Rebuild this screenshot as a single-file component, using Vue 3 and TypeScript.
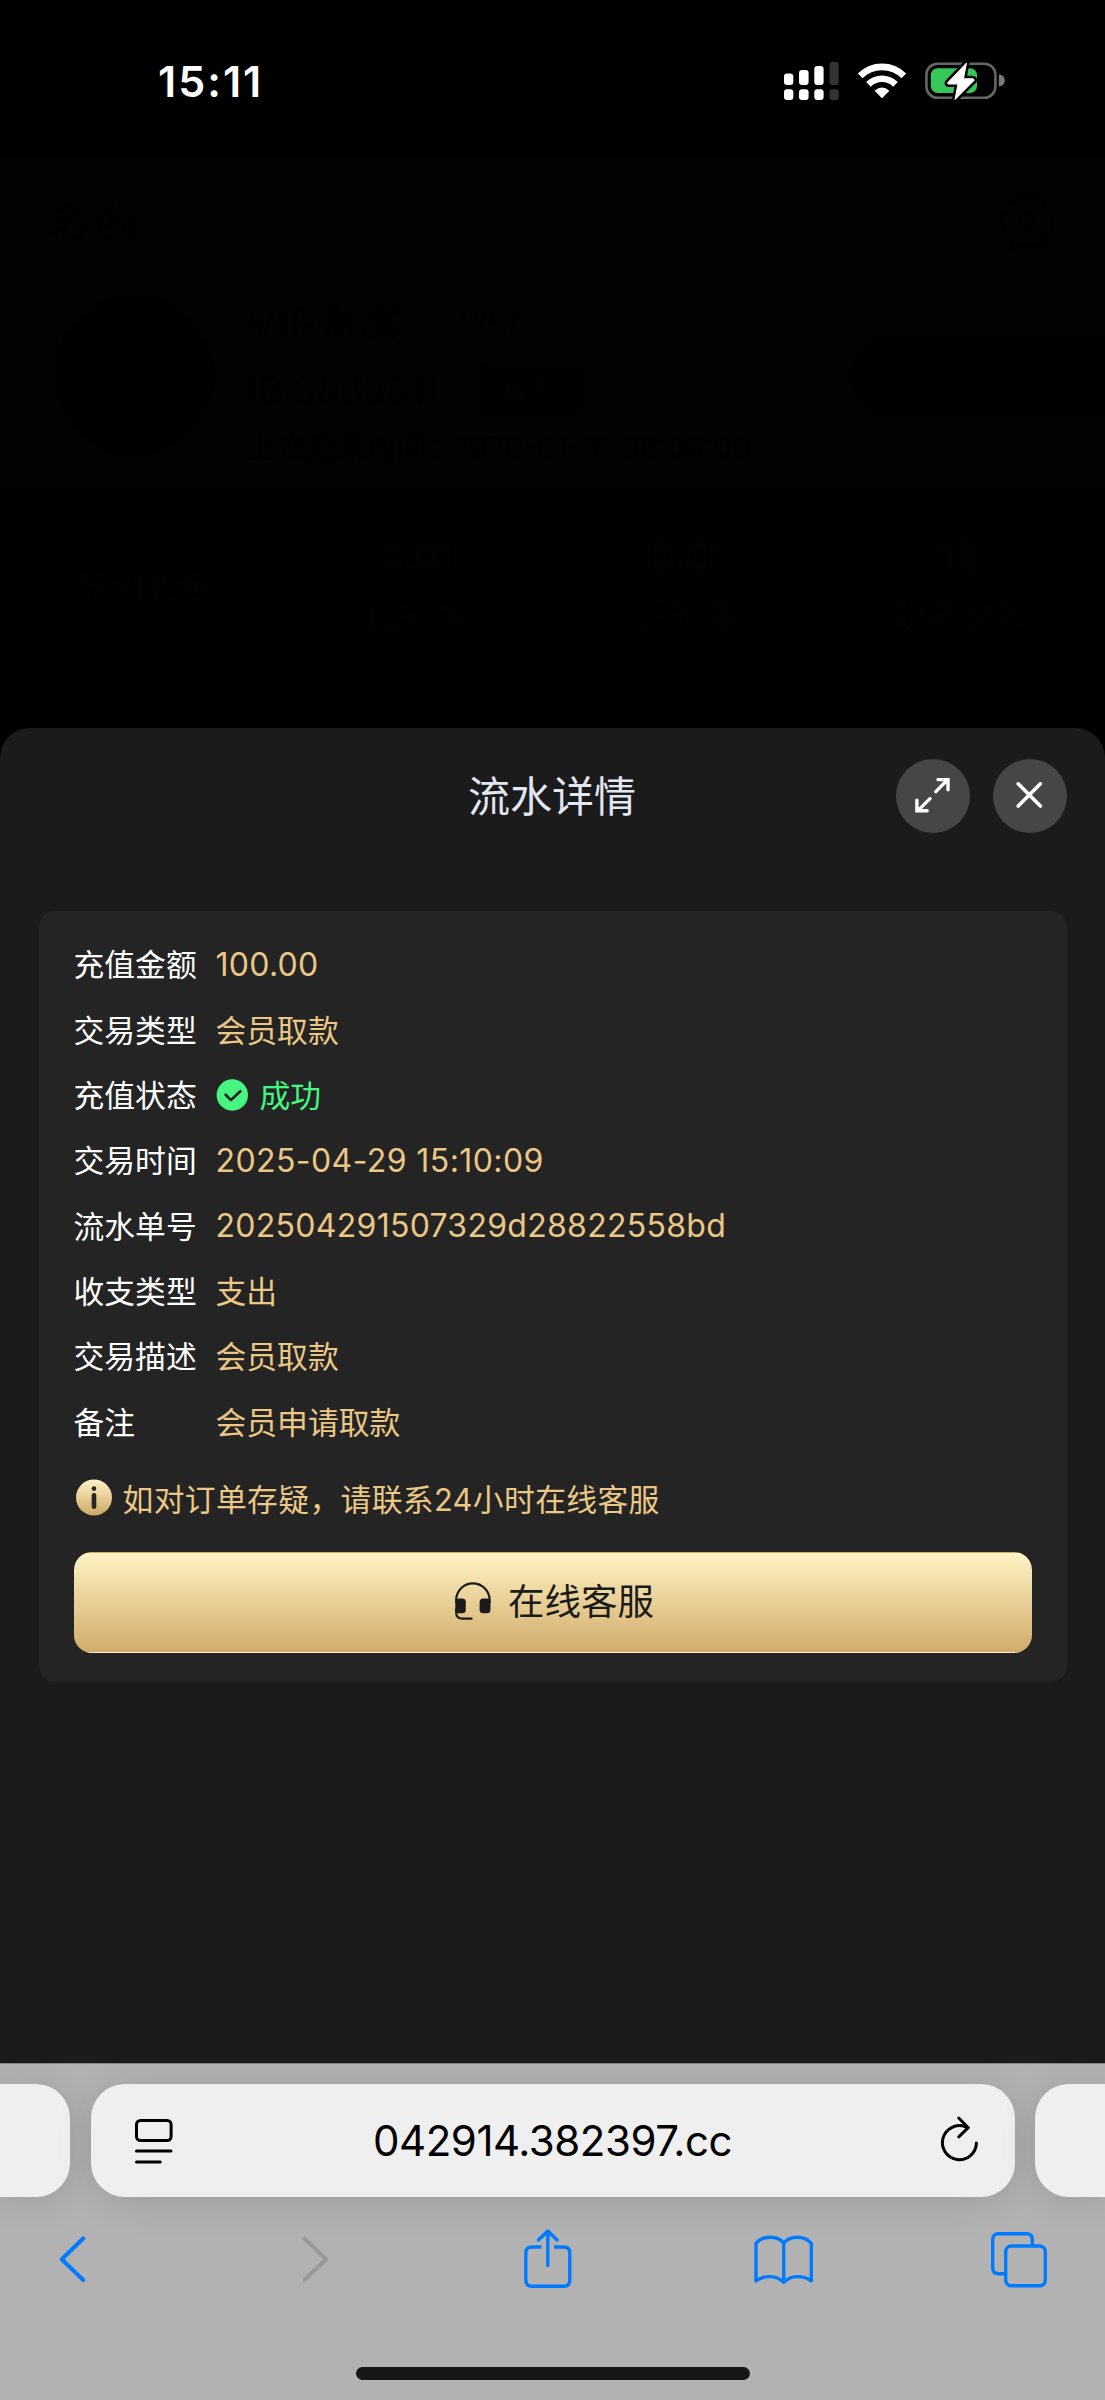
<script setup lang="ts">
interface DetailRow {
  label: string
  value: string
  kind?: 'status' | 'number' | 'time'
}

const rows: DetailRow[] = [
  { label: '充值金额', value: '100.00', kind: 'number' },
  { label: '交易类型', value: '会员取款' },
  { label: '充值状态', value: '成功', kind: 'status' },
  { label: '交易时间', value: '2025-04-29 15:10:09', kind: 'time' },
  { label: '流水单号', value: '202504291507329d28822558bd', kind: 'number' },
  { label: '收支类型', value: '支出' },
  { label: '交易描述', value: '会员取款' },
  { label: '备注', value: '会员申请取款' },
]

const stats = [
  { value: '', label: '签到礼金' },
  { value: '0.01', label: '周礼金' },
  { value: '0.01', label: '月礼金' },
  { value: '18', label: '观看次数' },
]
</script>

<template>
  <div class="screen" lang="zh-CN">
    <header class="status-bar">
      <span class="clock">15:11</span>
      <div class="indicators">
        <svg class="signal" width="55" height="38" viewBox="0 0 55 38">
          <g fill="#fff">
            <rect x="0" y="11.5" width="9.3" height="11.5" rx="3" />
            <rect x="15" y="8" width="9.6" height="15" rx="3" />
            <rect x="30.3" y="4" width="9.3" height="19" rx="3" />
            <rect x="0" y="27.3" width="9.3" height="10.7" rx="3" />
            <rect x="15" y="27.3" width="9.6" height="10.7" rx="3" />
            <rect x="30.3" y="27.3" width="9.3" height="10.7" rx="3" />
          </g>
          <g fill="#333">
            <rect x="45.5" y="0" width="9.3" height="23" rx="3" />
            <rect x="45.5" y="27.3" width="9.3" height="10.7" rx="3" />
          </g>
        </svg>
        <svg class="wifi" width="50" height="36" viewBox="0 0 50 36">
          <g fill="none" stroke="#fff" stroke-width="6.6">
            <path d="M3.2 12.8 A31 31 0 0 1 46.8 12.8" />
            <path d="M11.5 21.3 A19.2 19.2 0 0 1 38.5 21.3" />
          </g>
          <path fill="#fff" d="M25 35.3 L17.6 27.8 Q25 21.2 32.4 27.8 Z" />
        </svg>
        <svg class="battery" width="80" height="40" viewBox="0 0 80 40">
          <rect x="1.4" y="2.7" width="69" height="34" rx="11" fill="none" stroke="#666" stroke-width="2.6" />
          <path d="M73.8 13.5 a6 6 0 0 1 0 12 z" fill="#777" />
          <rect x="5.8" y="7.2" width="46.2" height="24.8" rx="7" fill="#35c759" />
          <path d="M41.5 2 L22.8 21.6 Q22.2 22.8 23.5 23 H33 L30 38.5 L49 19.5 Q49.5 18.2 48 17.8 H38.5 Z" fill="#fff" stroke="#000" stroke-width="6" stroke-linejoin="round" />
          <path d="M41.5 2 L22.8 21.6 Q22.2 22.8 23.5 23 H33 L30 38.5 L49 19.5 Q49.5 18.2 48 17.8 H38.5 Z" fill="#fff" stroke="#fff" stroke-width="1" stroke-linejoin="round" />
        </svg>
      </div>
    </header>

    <!-- profile page, dimmed by the modal backdrop -->
    <section class="profile" aria-hidden="true">
      <div class="profile-bar">
        <span class="profile-title">我的</span>
        <svg width="60" height="56" viewBox="0 0 60 56" fill="none" stroke="#000" stroke-width="5" stroke-linejoin="round">
          <path d="M17 3 H43 L57 28 L43 53 H17 L3 28 Z" />
          <circle cx="30" cy="28" r="7" />
        </svg>
      </div>
      <div class="user">
        <div class="avatar"></div>
        <div class="user-info">
          <div class="user-line name">VIP贵宾<span class="vip">VIP1</span></div>
          <div class="user-line uid">ID:3838811<span class="copy">复制</span></div>
          <div class="user-line login">上次登录时间：1970-01-01 08:00:00</div>
        </div>
        <div class="signed">已签到</div>
      </div>
      <div class="stats">
        <div v-for="s in stats" :key="s.label" class="stat">
          <b v-if="s.value">{{ s.value }}</b>
          <span>{{ s.label }}</span>
        </div>
      </div>
    </section>

    <main class="sheet">
      <div class="sheet-head">
        <h1>流水详情</h1>
        <div class="head-actions">
          <button class="round" aria-label="expand">
            <svg width="74" height="74" viewBox="0 0 74 74" fill="none" stroke="#fff" stroke-width="3.4" stroke-linecap="round">
              <path d="M39.8 32.6 L51.6 20.8 M42 20.6 H52 V30.8" />
              <path d="M34 39.6 L22.2 51.4 M20.9 41.2 V51.7 H31.2" />
            </svg>
          </button>
          <button class="round" aria-label="close">
            <svg width="74" height="74" viewBox="0 0 74 74" fill="none" stroke="#fff" stroke-width="3.6" stroke-linecap="round">
              <path d="M25.2 24.8 L47.4 47 M47.4 24.8 L25.2 47" />
            </svg>
          </button>
        </div>
      </div>

      <section class="card">
        <dl class="details">
          <div v-for="row in rows" :key="row.label" class="row">
            <dt>{{ row.label }}</dt>
            <dd :class="row.kind">
              <svg v-if="row.kind === 'status'" width="32" height="32" viewBox="0 0 32 32">
                <circle cx="16.3" cy="16" r="15.7" fill="#47f581" />
                <path d="M9.6 15.8 L15 21.1 L24.3 12.2" fill="none" stroke="#242424" stroke-width="2.7" stroke-linecap="round" stroke-linejoin="round" />
              </svg>
              <span>{{ row.value }}</span>
            </dd>
          </div>
        </dl>

        <p class="notice">
          <svg width="36" height="37" viewBox="0 0 36 37">
            <defs>
              <linearGradient id="gold" x1="0" y1="0" x2="0" y2="1">
                <stop offset="0" stop-color="#fff3c4" />
                <stop offset="1" stop-color="#cda766" />
              </linearGradient>
            </defs>
            <circle cx="18" cy="18.5" r="18" fill="url(#gold)" />
            <circle cx="18" cy="9.6" r="2.3" fill="#242424" />
            <rect x="15.7" y="14" width="4.6" height="16" rx="2.3" fill="#242424" />
          </svg>
          <span>如对订单存疑，请联系24小时在线客服</span>
        </p>

        <button class="service">
          <svg width="36" height="38" viewBox="0 0 36 38">
            <path d="M1.2 21 V18 A16.6 16.6 0 0 1 34.6 18 V21" fill="none" stroke="#1b1b1b" stroke-width="2.2" />
            <rect x="0.3" y="16.6" width="10.5" height="14.6" rx="3.5" fill="#1b1b1b" />
            <rect x="24.6" y="16.6" width="10.9" height="14.6" rx="3.5" fill="#1b1b1b" />
            <path d="M1.2 27 V30.5 Q1.2 36.6 7.5 36.6 H16.6" fill="none" stroke="#1b1b1b" stroke-width="2.2" stroke-linecap="round" />
          </svg>
          <span>在线客服</span>
        </button>
      </section>
    </main>

    <footer class="browser">
      <div class="tabs">
        <div class="pill side left"></div>
        <div class="pill address">
          <svg width="38" height="46" viewBox="0 0 38 46" fill="none" stroke="#000" stroke-width="3" stroke-linecap="round">
            <rect x="1.5" y="2.5" width="34.6" height="20" rx="4" />
            <path d="M1.5 33 H36 M1.5 44 H25.2" />
          </svg>
          <span class="url">042914.382397.cc</span>
          <svg width="46" height="50" viewBox="-8 0 46 50" fill="none" stroke="#000" stroke-width="3" stroke-linecap="round" stroke-linejoin="round">
            <path d="M35.4 27 A17 17 0 1 1 24.5 10.8 L27 11.6" />
            <path d="M17.8 2 L27.2 11.7 L17.8 20.8" />
          </svg>
        </div>
        <div class="pill side right"></div>
      </div>
      <nav class="toolbar">
        <svg class="back" width="28" height="60" viewBox="0 0 28 60" fill="none" stroke="#007aff" stroke-width="4" stroke-linecap="round" stroke-linejoin="round">
          <path d="M25.2 9.5 L3.7 30.2 L25.2 51" />
        </svg>
        <svg class="forward" width="28" height="60" viewBox="0 0 28 60" fill="none" stroke="#999" stroke-width="4" stroke-linecap="round" stroke-linejoin="round">
          <path d="M3.5 9.5 L25 30.2 L3.5 51" />
        </svg>
        <svg class="share" width="50" height="60" viewBox="0 0 50 60" fill="none" stroke="#007aff" stroke-width="3.4" stroke-linecap="round" stroke-linejoin="round">
          <path stroke-linecap="butt" d="M18.5 18 H8.8 Q2.8 18 2.8 24 V51 Q2.8 57.2 8.8 57.2 H40.8 Q46.8 57.2 46.8 51 V24 Q46.8 18 40.8 18 H31" />
          <path d="M24.8 36.5 V1.9 M15.5 11 L24.8 2 L34.1 11" />
        </svg>
        <svg class="book" width="62" height="60" viewBox="0 0 62 60" fill="none" stroke="#007aff" stroke-width="3.4" stroke-linecap="round" stroke-linejoin="round">
          <path d="M30.7 14 Q26 8.2 17 8.2 Q8 8.2 3 14.3 V52 Q9 47.6 17 47.6 Q25 47.6 30.7 53.3 Q36.5 47.6 44.5 47.6 Q53 47.6 58.3 52 V14.3 Q53 8.2 44.5 8.2 Q35.5 8.2 30.7 14 V53.3" />
        </svg>
        <svg class="windows" width="58" height="60" viewBox="0 0 58 60" fill="none" stroke="#007aff" stroke-width="3.4">
          <path d="M14.5 44.7 H8.5 Q2.7 44.7 2.7 39 V10.5 Q2.7 4.8 8.5 4.8 H36.5 Q42.3 4.8 42.3 10.5 V16" />
          <rect x="15.7" y="17" width="39.6" height="39.8" rx="5.5" />
        </svg>
      </nav>
      <div class="home-indicator"></div>
    </footer>
  </div>
</template>

<style>
body {
  margin: 0;
  background: #000;
}
</style>

<style scoped>
.screen {
  width: 1105px;
  height: 2400px;
  display: flex;
  flex-direction: column;
  overflow: hidden;
  background: #000;
  font-family: Inter, 'Noto Sans CJK SC', sans-serif;
}
.screen * {
  box-sizing: border-box;
}
svg {
  display: block;
  flex: none;
}
button {
  border: 0;
  padding: 0;
  font: inherit;
}

.status-bar {
  height: 155px;
  flex: none;
  display: flex;
  justify-content: space-between;
  padding: 0 100px 0 158px;
}
.clock {
  margin-top: 55px;
  font-size: 43px;
  line-height: 52px;
  font-weight: 600;
  letter-spacing: 2px;
  color: #fff;
}
.indicators {
  display: flex;
  align-items: flex-start;
}
.signal {
  margin-top: 62px;
}
.wifi {
  margin: 63px 0 0 18px;
}
.battery {
  margin: 61px 0 0 18px;
}

.profile {
  height: 573px;
  flex: none;
  display: flex;
  flex-direction: column;
  background: #020200;
  color: #000;
}
.profile-bar {
  display: flex;
  justify-content: space-between;
  align-items: center;
  height: 134px;
  padding: 0 48px 0 51px;
}
.profile-title {
  font-size: 43px;
  font-weight: 500;
}
.user {
  display: flex;
  height: 201px;
  padding-left: 54px;
}
.avatar {
  width: 160px;
  height: 160px;
  margin-top: 6px;
  border-radius: 50%;
  background: #000;
}
.user-info {
  width: 603px;
  margin-left: 33px;
}
.user-line {
  display: flex;
  align-items: center;
  white-space: nowrap;
}
.name {
  height: 64px;
  font-size: 43px;
  font-weight: 500;
}
.vip {
  margin-left: 54px;
  font-size: 30px;
  font-style: italic;
}
.uid {
  height: 72px;
  font-size: 37px;
}
.copy {
  margin-left: 39px;
  width: 101px;
  height: 51px;
  line-height: 51px;
  text-align: center;
  border-radius: 8px;
  background: #000;
  color: #020202;
  font-size: 28px;
}
.login {
  height: 40px;
  font-size: 30px;
  color: #010100;
}
.signed {
  flex: 1;
  height: 83px;
  margin-top: 46px;
  padding-left: 74px;
  line-height: 83px;
  font-size: 35px;
  border-radius: 42px 0 0 42px;
  background: #000;
  color: #010101;
}
.stats {
  flex: 1;
  display: flex;
  padding: 38px 10px 0;
  background: #000;
  color: #020202;
}
.stat {
  flex: 1;
  height: 114px;
  display: flex;
  flex-direction: column;
  align-items: center;
  justify-content: center;
  gap: 10px;
  font-size: 33px;
}
.stat b {
  font-size: 38px;
  font-weight: 500;
}

.sheet {
  height: 1335px;
  flex: none;
  display: flex;
  flex-direction: column;
  padding: 31px 38.5px 0;
  border-radius: 30px 30px 0 0;
  background: #1b1b1b;
}
.sheet-head {
  display: grid;
  grid-template-columns: 1fr auto 1fr;
  align-items: center;
  height: 74px;
}
.sheet-head h1 {
  grid-column: 2;
  margin: 2px 1px 0 0;
  font-size: 42px;
  line-height: 60px;
  font-weight: 400;
  color: #e2e6f2;
}
.head-actions {
  justify-self: end;
  display: flex;
  gap: 23px;
}
.round {
  width: 74px;
  height: 74px;
  border-radius: 50%;
  background: #464646;
}
.card {
  height: 771px;
  margin-top: 78px;
  padding: 20.5px 35px 0;
  border-radius: 16px;
  background: #242424;
}
.details {
  margin: 0;
}
.row {
  display: flex;
  align-items: center;
  height: 65.35px;
}
dt {
  width: 142px;
  padding-bottom: 3px;
  font-size: 30.8px;
  color: #fff;
}
dd {
  margin: 0;
  padding-bottom: 3px;
  display: flex;
  align-items: center;
  gap: 12px;
  font-size: 30.8px;
  color: #ebc786;
}
.number,
.time {
  padding-bottom: 0;
  font-size: 32px;
  letter-spacing: 0.28px;
}
.time {
  letter-spacing: 0.42px;
}
.status {
  color: #47f581;
}
.status svg {
  margin-top: 3px;
}
.notice {
  display: flex;
  align-items: center;
  gap: 11px;
  height: 54px;
  margin: 16.5px 0 0;
  padding-left: 2px;
  font-size: 30.8px;
  letter-spacing: 0.35px;
  color: #ebc786;
}
.notice span {
  margin-top: -1px;
}
.service {
  width: 100%;
  height: 101px;
  margin-top: 27px;
  padding-left: 4px;
  display: flex;
  align-items: center;
  justify-content: center;
  gap: 17px;
  border: 1px solid transparent;
  border-radius: 18px;
  background: linear-gradient(#fff3c4, #d1ab6a);
  font-size: 36.5px;
  color: #1b1b1b;
}
.service svg {
  margin-top: -3px;
}
.service span {
  margin-top: -5px;
}

.browser {
  flex: 1;
  display: flex;
  flex-direction: column;
  align-items: center;
  background: #b2b2b2;
  border-top: 1px solid #858585;
}
.tabs {
  width: 100%;
  height: 113px;
  flex: none;
  margin-top: 20px;
  display: flex;
  gap: 20.5px;
}
.pill {
  background: #efefef;
  box-shadow: 0 4px 36px rgba(0, 0, 0, 0.13);
}
.side {
  width: 70px;
}
.left {
  border-radius: 0 34px 34px 0;
}
.right {
  border-radius: 34px 0 0 34px;
}
.address {
  flex: 1;
  display: flex;
  align-items: center;
  justify-content: space-between;
  padding: 0 36px 0 44px;
  border-radius: 34px;
}
.url {
  font-size: 42px;
  letter-spacing: -0.45px;
  color: #000;
}
.toolbar {
  width: 100%;
  display: flex;
  margin-top: 32px;
  padding-left: 57.5px;
}
.forward {
  margin-left: 215px;
}
.share {
  margin-left: 194px;
}
.book {
  margin-left: 180.5px;
}
.windows {
  margin-left: 175px;
}
.home-indicator {
  width: 394px;
  height: 13px;
  margin-top: 78px;
  border-radius: 7px;
  background: #161616;
}
</style>
